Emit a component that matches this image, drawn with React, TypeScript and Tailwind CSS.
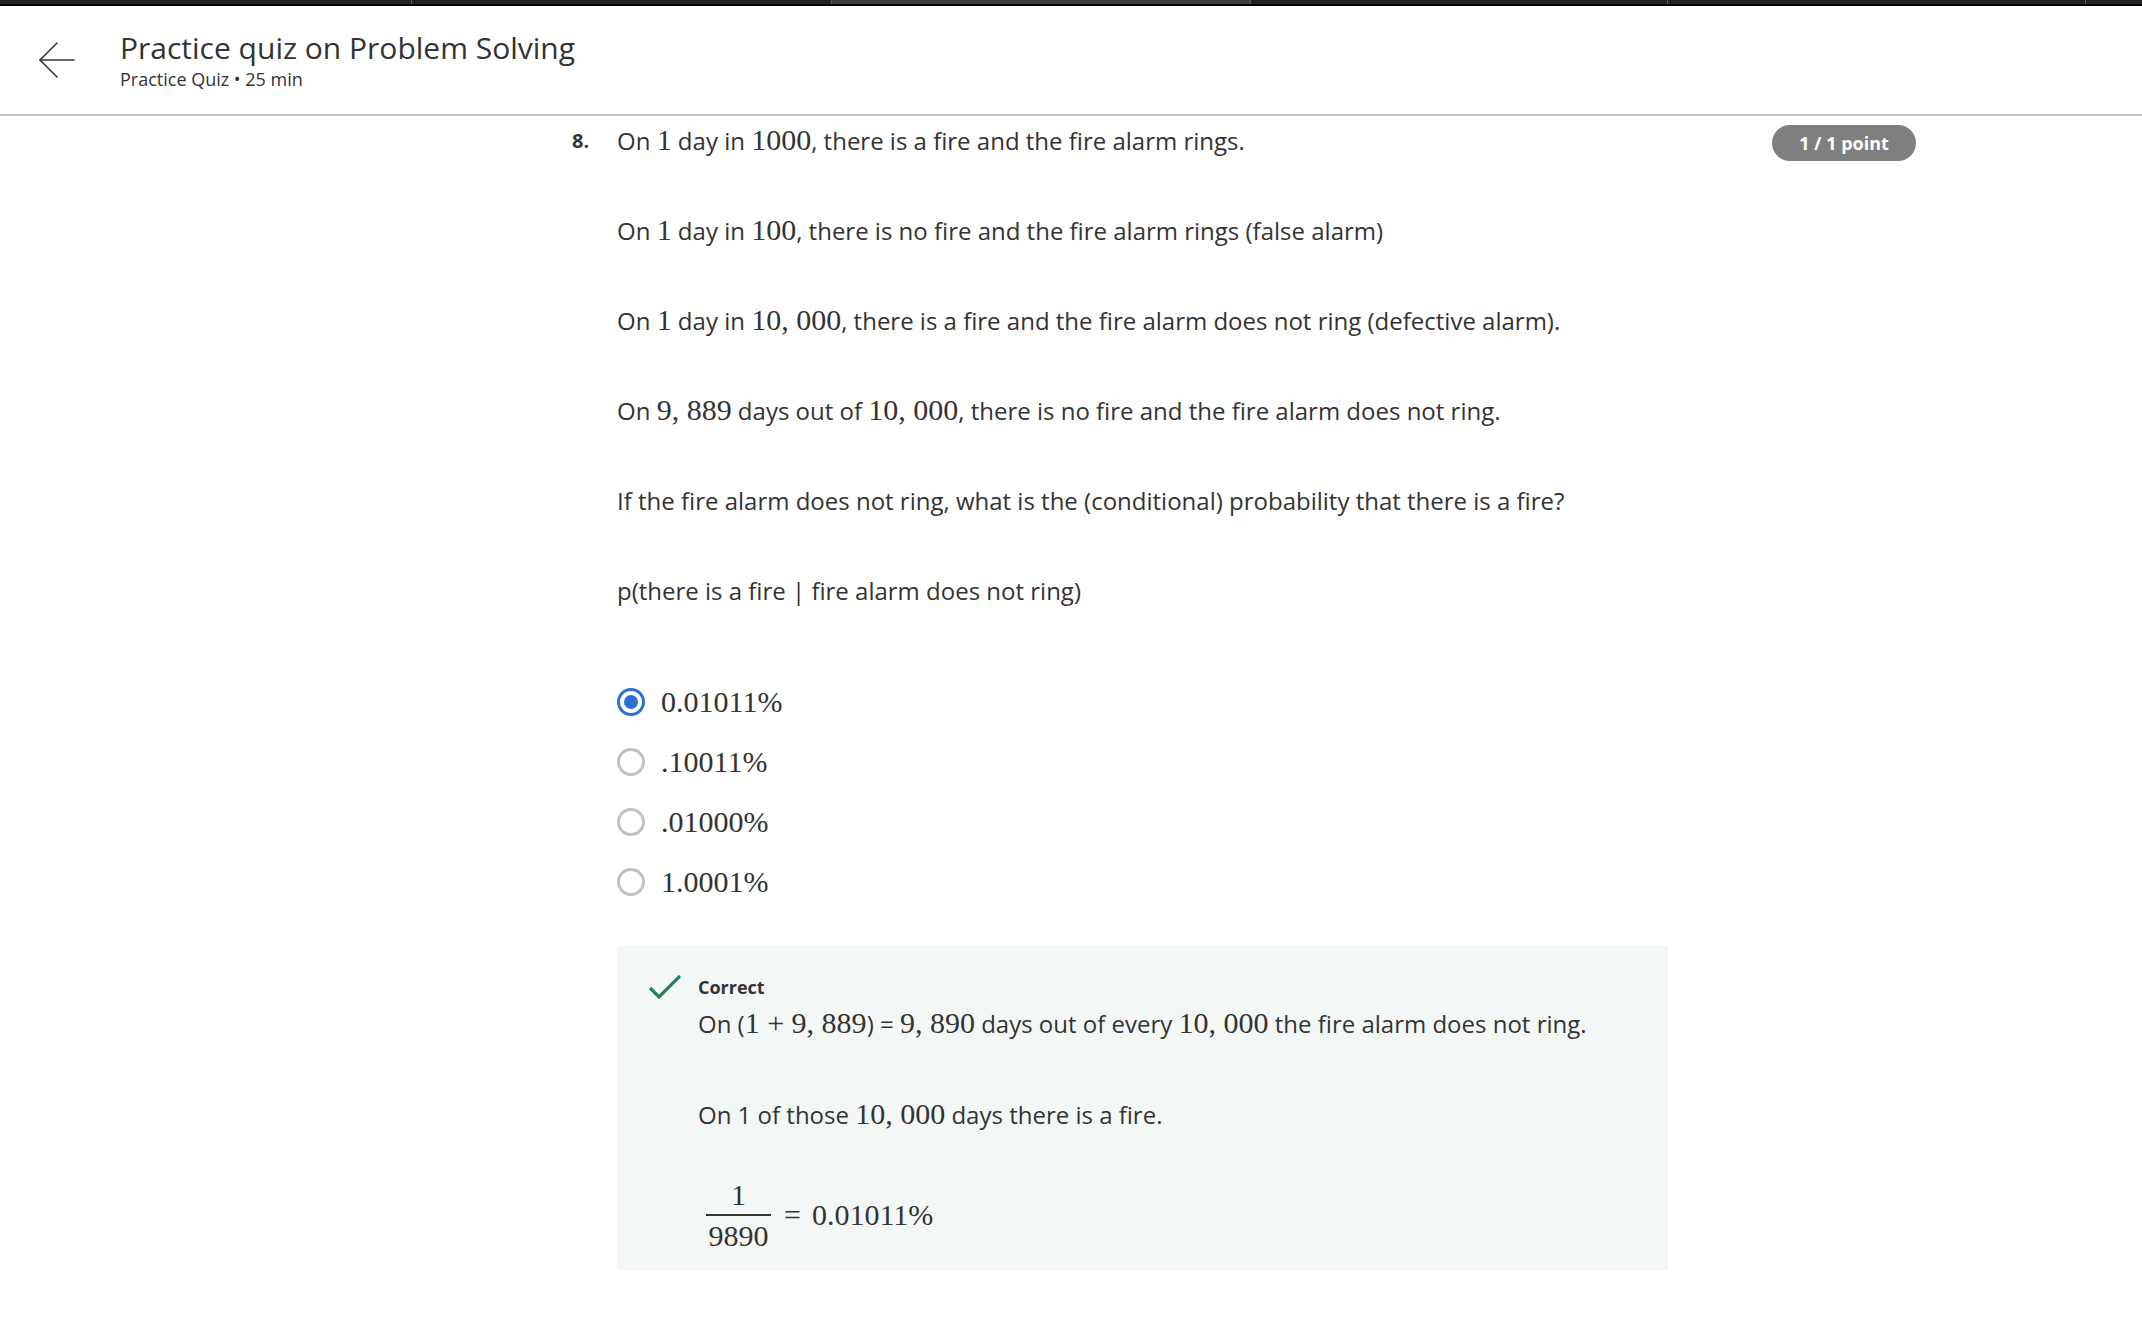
import React from "react";

function M({ children }: { children: React.ReactNode }) {
  return (
    <span className="font-['Liberation_Serif',serif] text-[30px] leading-[0]">
      {children}
    </span>
  );
}

function Radio({ checked }: { checked?: boolean }) {
  if (checked) {
    return (
      <span className="flex h-[28px] w-[28px] shrink-0 items-center justify-center rounded-full border-[3px] border-[#2d6fd2]">
        <span className="h-[14px] w-[14px] rounded-full bg-[#2d6fd2]" />
      </span>
    );
  }
  return (
    <span className="h-[28px] w-[28px] shrink-0 rounded-full border-[3px] border-[#c2c2c2]" />
  );
}

const tabs = [412, 420, 419, 417, 418];

export default function App() {
  const options = ["0.01011%", ".10011%", ".01000%", "1.0001%"];
  return (
    <div className="min-h-screen bg-white font-['Open_Sans',sans-serif] text-[#333]">
      {/* top tab strip */}
      <div className="flex h-[4px] bg-[#222]">
        {tabs.map((w, i) => (
          <div
            key={i}
            style={{ width: w }}
            className={
              i === 2
                ? "h-full border-r border-[#5a5a5a] bg-[#3d3d3d]"
                : "h-full border-r border-[#5a5a5a] bg-[#222]"
            }
          />
        ))}
        <div className="h-full flex-1 bg-[#222]" />
      </div>
      <div className="h-[2px] bg-black" />

      {/* header */}
      <header className="flex h-[110px] items-center border-b-2 border-[#c4c4c4] pl-[39px]">
        <svg width="36" height="36" viewBox="0 0 36 36" fill="none" stroke="#333" strokeWidth="1.6" strokeLinecap="round" strokeLinejoin="round">
          <path d="M1 18H35" />
          <path d="M18 1L1 18L18 35" />
        </svg>
        <div className="ml-[45px] flex flex-col">
          <h1 className="text-[30px] leading-[36px] font-normal text-[#333]">
            Practice quiz on Problem Solving
          </h1>
          <div className="mt-[1px] text-[18px] leading-[24px] text-[#333]">
            Practice Quiz • 25 min
          </div>
        </div>
      </header>

      {/* main */}
      <main className="ml-[572px] flex w-[1344px] pt-[7px]">
        <div className="w-[45px] shrink-0 text-[20px] font-bold leading-[36px] text-[#333]">
          8.
        </div>
        <div className="w-[1051px] shrink-0">
          <div className="flex flex-col gap-[54px] text-[24px] leading-[36px]">
            <p>
              On <M>1</M> day in <M>1000</M>, there is a fire and the fire alarm rings.
            </p>
            <p>
              On <M>1</M> day in <M>100</M>, there is no fire and the fire alarm rings (false alarm)
            </p>
            <p>
              On <M>1</M> day in <M>10, 000</M>, there is a fire and the fire alarm does not ring (defective alarm).
            </p>
            <p>
              On <M>9, 889</M> days out of <M>10, 000</M>, there is no fire and the fire alarm does not ring.
            </p>
            <p>
              If the fire alarm does not ring, what is the (conditional) probability that there is a fire?
            </p>
            <p>p(there is a fire | fire alarm does not ring)</p>
          </div>

          <div className="mt-[63px] flex flex-col">
            {options.map((o, i) => (
              <label key={o} className="flex h-[60px] items-center gap-[16px]">
                <Radio checked={i === 0} />
                <span className="font-['Liberation_Serif',serif] text-[30px] leading-[36px] text-[#333]">
                  {o}
                </span>
              </label>
            ))}
          </div>

          <div className="mt-[34px] flex bg-[#f3f8f6] pb-[18px] pl-[32px] pt-[29px]">
            <svg className="shrink-0" width="32" height="24" viewBox="0 0 32 24" fill="none" stroke="#1f8354" strokeWidth="3.2" strokeLinecap="butt" strokeLinejoin="miter">
              <path d="M1 13L10 22L31 1" />
            </svg>
            <div className="ml-[17px] flex flex-col">
              <div className="text-[18px] font-bold leading-[24px] text-[#333]">Correct</div>
              <p className="mt-[7px] text-[24px] leading-[36px]">
                On (<M>1 + 9, 889</M>) = <M>9, 890</M> days out of every <M>10, 000</M> the fire alarm does not ring.
              </p>
              <p className="mt-[55px] text-[24px] leading-[36px]">
                On 1 of those <M>10, 000</M> days there is a fire.
              </p>
              <div className="mt-[46px] flex items-center font-['Liberation_Serif',serif] text-[30px] text-[#333]">
                <div className="ml-[8px] flex w-[65px] flex-col items-center">
                  <span className="pb-[3px] leading-[32px]">1</span>
                  <span className="h-[1.5px] w-full bg-[#333]" />
                  <span className="pt-[4px] leading-[32px]">9890</span>
                </div>
                <span className="ml-[13px] leading-[32px]">=</span>
                <span className="ml-[11px] leading-[32px]">0.01011%</span>
              </div>
            </div>
          </div>
        </div>
        <div className="flex-1" />
        <div className="mt-[2px] flex h-[36px] w-[144px] shrink-0 items-center justify-center self-start rounded-full bg-[#7f7f7f] text-[18px] font-bold text-white">
          1 / 1 point
        </div>
      </main>
    </div>
  );
}
